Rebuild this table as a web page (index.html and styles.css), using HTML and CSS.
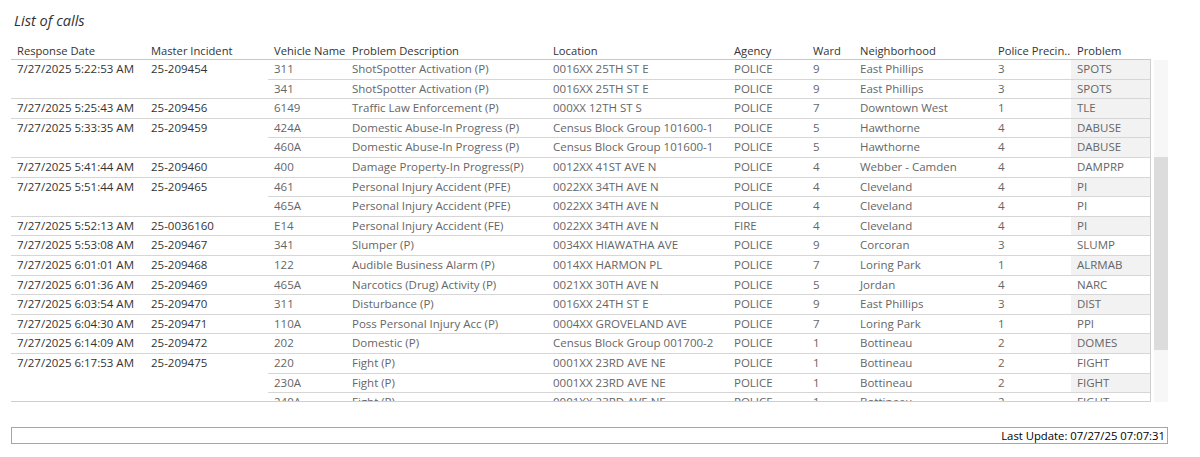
FILE: index.html
```html
<!DOCTYPE html>
<html>
<head>
<meta charset="utf-8">
<link rel="stylesheet" href="styles.css">
</head>
<body>
<div class="report">
  <div class="title">List of calls</div>
  <table class="grid head">
    <colgroup>
      <col class="c1"><col class="c2"><col class="c3"><col class="c4"><col class="c5"><col class="c6"><col class="c7"><col class="c8"><col class="c9"><col class="c10">
    </colgroup>
    <tr>
      <th>Response Date</th><th>Master Incident</th><th>Vehicle Name</th><th>Problem Description</th><th>Location</th><th>Agency</th><th>Ward</th><th>Neighborhood</th><th>Police Precin..</th><th>Problem</th>
    </tr>
  </table>
  <div class="bodywrap">
    <div class="viewport">
      <table class="grid body">
        <colgroup>
          <col class="c1"><col class="c2"><col class="c3"><col class="c4"><col class="c5"><col class="c6"><col class="c7"><col class="c8"><col class="c9"><col class="c10">
        </colgroup>
        <tr><td class="dk" rowspan="2">7/27/2025 5:22:53 AM</td><td class="dk" rowspan="2">25-209454</td><td>311</td><td>ShotSpotter Activation (P)</td><td>0016XX 25TH ST E</td><td>POLICE</td><td>9</td><td>East Phillips</td><td>3</td><td class="pr g">SPOTS</td></tr>
        <tr><td>341</td><td>ShotSpotter Activation (P)</td><td>0016XX 25TH ST E</td><td>POLICE</td><td>9</td><td>East Phillips</td><td>3</td><td class="pr g">SPOTS</td></tr>
        <tr><td class="dk">7/27/2025 5:25:43 AM</td><td class="dk">25-209456</td><td>6149</td><td>Traffic Law Enforcement (P)</td><td>000XX 12TH ST S</td><td>POLICE</td><td>7</td><td>Downtown West</td><td>1</td><td class="pr g">TLE</td></tr>
        <tr><td class="dk" rowspan="2">7/27/2025 5:33:35 AM</td><td class="dk" rowspan="2">25-209459</td><td>424A</td><td>Domestic Abuse-In Progress (P)</td><td>Census Block Group 101600-1</td><td>POLICE</td><td>5</td><td>Hawthorne</td><td>4</td><td class="pr g">DABUSE</td></tr>
        <tr><td>460A</td><td>Domestic Abuse-In Progress (P)</td><td>Census Block Group 101600-1</td><td>POLICE</td><td>5</td><td>Hawthorne</td><td>4</td><td class="pr g">DABUSE</td></tr>
        <tr><td class="dk">7/27/2025 5:41:44 AM</td><td class="dk">25-209460</td><td>400</td><td>Damage Property-In Progress(P)</td><td>0012XX 41ST AVE N</td><td>POLICE</td><td>4</td><td>Webber - Camden</td><td>4</td><td class="pr">DAMPRP</td></tr>
        <tr><td class="dk" rowspan="2">7/27/2025 5:51:44 AM</td><td class="dk" rowspan="2">25-209465</td><td>461</td><td>Personal Injury Accident (PFE)</td><td>0022XX 34TH AVE N</td><td>POLICE</td><td>4</td><td>Cleveland</td><td>4</td><td class="pr g">PI</td></tr>
        <tr><td>465A</td><td>Personal Injury Accident (PFE)</td><td>0022XX 34TH AVE N</td><td>POLICE</td><td>4</td><td>Cleveland</td><td>4</td><td class="pr">PI</td></tr>
        <tr><td class="dk">7/27/2025 5:52:13 AM</td><td class="dk">25-0036160</td><td>E14</td><td>Personal Injury Accident (FE)</td><td>0022XX 34TH AVE N</td><td>FIRE</td><td>4</td><td>Cleveland</td><td>4</td><td class="pr g">PI</td></tr>
        <tr><td class="dk">7/27/2025 5:53:08 AM</td><td class="dk">25-209467</td><td>341</td><td>Slumper (P)</td><td>0034XX HIAWATHA AVE</td><td>POLICE</td><td>9</td><td>Corcoran</td><td>3</td><td class="pr">SLUMP</td></tr>
        <tr><td class="dk">7/27/2025 6:01:01 AM</td><td class="dk">25-209468</td><td>122</td><td>Audible Business Alarm (P)</td><td>0014XX HARMON PL</td><td>POLICE</td><td>7</td><td>Loring Park</td><td>1</td><td class="pr g">ALRMAB</td></tr>
        <tr><td class="dk">7/27/2025 6:01:36 AM</td><td class="dk">25-209469</td><td>465A</td><td>Narcotics (Drug) Activity (P)</td><td>0021XX 30TH AVE N</td><td>POLICE</td><td>5</td><td>Jordan</td><td>4</td><td class="pr">NARC</td></tr>
        <tr><td class="dk">7/27/2025 6:03:54 AM</td><td class="dk">25-209470</td><td>311</td><td>Disturbance (P)</td><td>0016XX 24TH ST E</td><td>POLICE</td><td>9</td><td>East Phillips</td><td>3</td><td class="pr g">DIST</td></tr>
        <tr><td class="dk">7/27/2025 6:04:30 AM</td><td class="dk">25-209471</td><td>110A</td><td>Poss Personal Injury Acc (P)</td><td>0004XX GROVELAND AVE</td><td>POLICE</td><td>7</td><td>Loring Park</td><td>1</td><td class="pr">PPI</td></tr>
        <tr><td class="dk">7/27/2025 6:14:09 AM</td><td class="dk">25-209472</td><td>202</td><td>Domestic (P)</td><td>Census Block Group 001700-2</td><td>POLICE</td><td>1</td><td>Bottineau</td><td>2</td><td class="pr g">DOMES</td></tr>
        <tr><td class="dk" rowspan="3">7/27/2025 6:17:53 AM</td><td class="dk" rowspan="3">25-209475</td><td>220</td><td>Fight (P)</td><td>0001XX 23RD AVE NE</td><td>POLICE</td><td>1</td><td>Bottineau</td><td>2</td><td class="pr">FIGHT</td></tr>
        <tr><td>230A</td><td>Fight (P)</td><td>0001XX 23RD AVE NE</td><td>POLICE</td><td>1</td><td>Bottineau</td><td>2</td><td class="pr g">FIGHT</td></tr>
        <tr><td>240A</td><td>Fight (P)</td><td>0001XX 23RD AVE NE</td><td>POLICE</td><td>1</td><td>Bottineau</td><td>2</td><td class="pr">FIGHT</td></tr>
      </table>
    </div>
    <div class="scrollbar"><div class="thumb"></div></div>
  </div>
  <div class="footer">Last Update: 07/27/25 07:07:31</div>
</div>
</body>
</html>
```

FILE: styles.css
```css
html, body {
  margin: 0;
  padding: 0;
  background: #ffffff;
}

.report {
  padding: 0 32px 0 11px;
  font-family: "Open Sans", "Noto Sans", sans-serif;
  font-size: 11.5px;
  color: #666666;
}

.title {
  margin: 10px 0 0 3px;
  height: 20px;
  line-height: 20px;
  font-style: italic;
  font-size: 14.6px;
  color: #333333;
}

.grid {
  table-layout: fixed;
  border-collapse: separate;
  border-spacing: 0;
  width: 1140px;
}

.c1 { width: 134px; }
.c2 { width: 123px; }
.c3 { width: 78px; }
.c4 { width: 201px; }
.c5 { width: 181px; }
.c6 { width: 79px; }
.c7 { width: 47px; }
.c8 { width: 138px; }
.c9 { width: 79px; }
.c10 { width: 80px; }

.head {
  margin-top: 12px;
}

.head th {
  text-align: left;
  font-weight: normal;
  font-size: 11.2px;
  color: #333333;
  padding: 0 3px 0 6px;
  height: 17px;
  line-height: 17px;
  border-bottom: 1px solid #c9c9c9;
  white-space: nowrap;
  overflow: hidden;
}

.bodywrap {
  display: flex;
  align-items: stretch;
  gap: 3px;
}

.viewport {
  width: 1140px;
  height: 341px;
  overflow: hidden;
  border-right: 1px solid #cfcfcf;
  border-bottom: 1px solid #cfcfcf;
}

.body td {
  padding: 0 5px 0 6px;
  height: 18.6px;
  line-height: 18.6px;
  border-bottom: 1px solid #d6d6d6;
  white-space: nowrap;
  overflow: hidden;
  vertical-align: top;
}

.body td.dk {
  color: #333333;
}

.body td.g {
  background: #f2f2f2;
}

.scrollbar {
  width: 14px;
  height: 342px;
  background: #f7f7f7;
  padding-top: 97px;
  box-sizing: border-box;
}

.thumb {
  height: 193px;
  background: #dcdcdc;
}

.footer {
  margin-top: 25px;
  width: 1157px;
  box-sizing: border-box;
  height: 17px;
  line-height: 15px;
  border: 1px solid #a6a6a6;
  text-align: right;
  padding-right: 2px;
  color: #000000;
  font-size: 11.3px;
}
```
